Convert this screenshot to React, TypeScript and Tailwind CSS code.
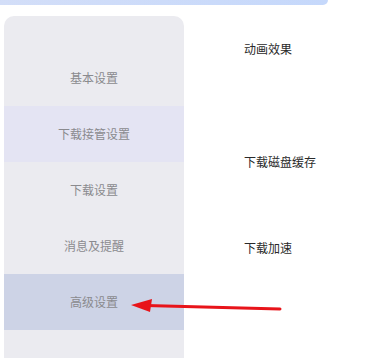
const items = ['基本设置', '下载接管设置', '下载设置', '消息及提醒', '高级设置'];

const rowBg: Record<number, string> = {
  1: 'bg-[#e4e4f3]',
  4: 'bg-[#cdd3e6]',
};

export default function App() {
  return (
    <div
      className="relative w-[372px] h-[358px] overflow-hidden bg-white"
      style={{ fontFamily: '"Noto Sans CJK SC", "Noto Sans", sans-serif' }}
    >
      <div className="h-[5px] w-[328px] rounded-br-[6px] bg-gradient-to-r from-[#d3def8] to-[#c5d8fb]" />
      <div className="flex pt-[11px] pl-1">
        <div className="w-[180px] h-[400px] rounded-t-[10px] bg-[#ebebf0] pt-[34px]">
          {items.map((label, i) => (
            <div
              key={label}
              className={`h-[56px] flex items-center justify-center text-xs text-[#8a8a8e] ${rowBg[i] ?? ''}`}
            >
              {label}
            </div>
          ))}
        </div>
        <div className="pl-[60px] text-xs text-[#2a2a2a]">
          <div className="mt-[25px] h-4 leading-4">动画效果</div>
          <div className="mt-[97px] h-4 leading-4">下载磁盘缓存</div>
          <div className="mt-[70px] h-4 leading-4">下载加速</div>
        </div>
      </div>
      <svg
        className="absolute left-0 top-0"
        width="372"
        height="358"
        viewBox="0 0 372 358"
      >
        <line x1="280" y1="309" x2="146" y2="305.5" stroke="#e8141a" strokeWidth="3" strokeLinecap="round" />
        <polygon points="131,305 152,299 150,312" fill="#e8141a" />
      </svg>
    </div>
  );
}
